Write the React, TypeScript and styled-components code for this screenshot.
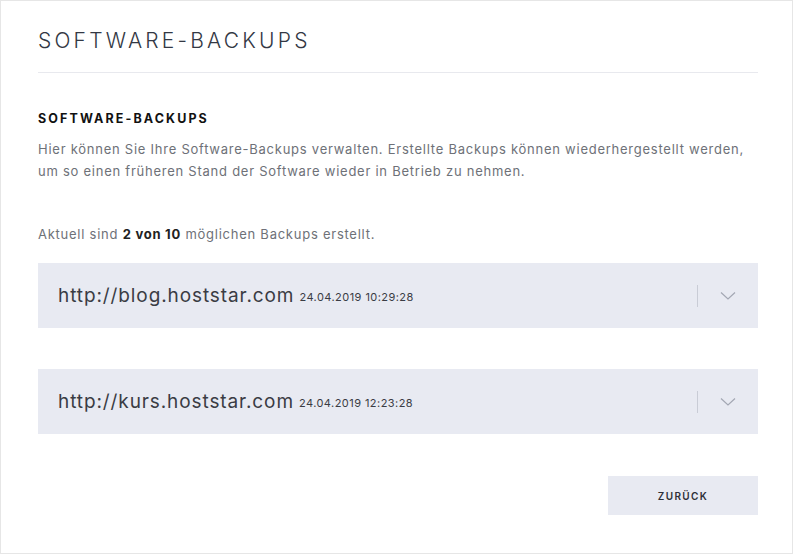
import { FC } from 'react';
import styled, { createGlobalStyle } from 'styled-components';

const GlobalStyle = createGlobalStyle`
	html, body {
		margin: 0;
		padding: 0;
		background: #ffffff;
	}
	body {
		font-family: Inter, 'Liberation Sans', sans-serif;
		color: #333;
	}
`;

const Card = styled.div`
	box-sizing: border-box;
	width: 793px;
	height: 554px;
	border: 1px solid #e6e6e6;
	padding: 26px 34px 0 37px;
`;

const PageTitle = styled.h1`
	margin: 0;
	font-size: 21px;
	line-height: 28px;
	font-weight: 300;
	letter-spacing: 3.2px;
	color: #333844;
`;

const Divider = styled.hr`
	margin: 17px 0 0;
	border: 0;
	border-top: 1px solid #e8e9ee;
`;

const SectionTitle = styled.h2`
	margin: 38px 0 0;
	font-size: 12.5px;
	line-height: 16px;
	font-weight: 700;
	letter-spacing: 2.1px;
	color: #111;
`;

const Text = styled.p`
	margin: 0;
	font-size: 13px;
	line-height: 22px;
	letter-spacing: 0.75px;
	color: #6e7178;

	b {
		color: #222;
		font-weight: 700;
	}
`;

const Intro = styled(Text)`
	margin-top: 11px;
`;

const Status = styled(Text)`
	margin-top: 41px;
`;

const BackupList = styled.div`
	display: flex;
	flex-direction: column;
	gap: 41px;
	margin-top: 18px;
`;

const BackupRow = styled.div`
	display: flex;
	align-items: center;
	height: 65px;
	padding: 0 22px 0 20px;
	background: #e8eaf2;
`;

const Url = styled.span`
	font-size: 19px;
	font-weight: 400;
	letter-spacing: 0.9px;
	color: #3a3c44;
`;

const Stamp = styled.span`
	margin-left: 5px;
	margin-top: 2px;
	font-size: 11px;
	letter-spacing: 0.45px;
	color: #3a3c44;
`;

const Toggle = styled.div`
	margin-left: auto;
	display: flex;
	align-items: center;
	gap: 22px;
`;

const Sep = styled.span`
	width: 1px;
	height: 22px;
	background: #c9ccd6;
`;

const Footer = styled.div`
	display: flex;
	justify-content: flex-end;
	margin-top: 42px;
`;

const BackButton = styled.button`
	width: 150px;
	height: 39px;
	border: 0;
	background: #e8eaf2;
	font-family: inherit;
	font-size: 10px;
	font-weight: 600;
	letter-spacing: 1.4px;
	color: #2e3038;
	cursor: pointer;
`;

const Chevron: FC = () => (
	<svg width="16" height="10" viewBox="0 0 16 10" fill="none">
		<path d="M1 1.5 L8 8 L15 1.5" stroke="#a3a7b3" strokeWidth="1.2" />
	</svg>
);

const backups = [
	{ url: 'http://blog.hoststar.com', date: '24.04.2019 10:29:28' },
	{ url: 'http://kurs.hoststar.com', date: '24.04.2019 12:23:28' },
];

const App: FC = () => (
	<>
		<GlobalStyle />
		<Card>
			<PageTitle>SOFTWARE-BACKUPS</PageTitle>
			<Divider />
			<SectionTitle>SOFTWARE-BACKUPS</SectionTitle>
			<Intro>
				Hier können Sie Ihre Software-Backups verwalten. Erstellte Backups können
				wiederhergestellt werden, um so einen früheren Stand der Software wieder in
				Betrieb zu nehmen.
			</Intro>
			<Status>
				Aktuell sind <b>2 von 10</b> möglichen Backups erstellt.
			</Status>
			<BackupList>
				{backups.map((b) => (
					<BackupRow key={b.url}>
						<Url>{b.url}</Url>
						<Stamp>{b.date}</Stamp>
						<Toggle>
							<Sep />
							<Chevron />
						</Toggle>
					</BackupRow>
				))}
			</BackupList>
			<Footer>
				<BackButton>ZURÜCK</BackButton>
			</Footer>
		</Card>
	</>
);

export default App;
